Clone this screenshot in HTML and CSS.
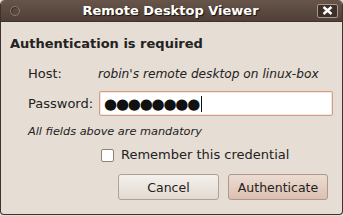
FILE: index.html
```html
<!DOCTYPE html>
<html>
<head>
<meta charset="utf-8">
<link rel="stylesheet" href="styles.css">
</head>
<body>
<div class="window">
  <div class="titlebar">
    <span class="menu-dot"></span>
    <span class="title">Remote Desktop Viewer</span>
    <span class="close">
      <svg width="11" height="9" viewBox="0 0 11 9"><path d="M1.5 1 L9.5 8 M9.5 1 L1.5 8" stroke="#fff" stroke-width="2.4" stroke-linecap="butt"/></svg>
    </span>
  </div>
  <div class="content">
    <div class="heading">Authentication is required</div>
    <div class="form">
      <div class="label">Host:</div>
      <div class="host">robin's remote desktop on linux-box</div>
      <div class="label pw-label">Password:</div>
      <div class="entry"><span class="dots">●●●●●●●●</span><span class="caret"></span></div>
    </div>
    <div class="note">All fields above are mandatory</div>
    <div class="remember"><span class="check"></span><span>Remember this credential</span></div>
    <div class="buttons">
      <div class="btn">Cancel</div>
      <div class="btn primary">Authenticate</div>
    </div>
  </div>
</div>
</body>
</html>
```
FILE: styles.css
```css
html, body {
  margin: 0;
  padding: 0;
  background: #e6ddd4;
}
.window {
  width: 343px;
  height: 215px;
  box-sizing: border-box;
  border: 1px solid #3e322b;
  border-top: none;
  border-radius: 5px 5px 4px 4px;
  background: #e6ddd4;
  overflow: hidden;
  font-family: "DejaVu Sans", sans-serif;
  color: #222;
}
.titlebar {
  height: 22px;
  background: linear-gradient(#67554a, #4f3f36);
  display: flex;
  align-items: center;
  position: relative;
  border-bottom: 1px solid #3e322b;
  box-sizing: border-box;
}
.menu-dot {
  width: 8px;
  height: 8px;
  border: 1px solid #8a7a70;
  border-radius: 50%;
  margin-left: 9px;
  margin-top: 1px;
  box-shadow: inset 1px 1px 0 #3a2d26;
}
.title {
  flex: 1;
  text-align: center;
  color: #fff;
  font-weight: bold;
  font-size: 13px;
  text-shadow: 1px 1px 1px #1a120e;
  margin-left: 4px;
}
.close {
  width: 19px;
  height: 12px;
  border: 1px solid #a8998f;
  border-radius: 2px;
  background: #3d3029;
  margin-right: 4px;
  display: flex;
  align-items: center;
  justify-content: center;
}
.content {
  padding: 14px 0 0 0;
}
.heading {
  font-weight: bold;
  font-size: 13px;
  line-height: 16px;
  margin-left: 9px;
}
.form {
  display: grid;
  grid-template-columns: 71px 234px;
  margin-left: 27px;
  margin-top: 14px;
  row-gap: 9px;
  align-items: center;
}
.label {
  font-size: 13px;
  line-height: 16px;
}
.host {
  font-style: italic;
  font-size: 12.2px;
  line-height: 16px;
  white-space: nowrap;
  margin-left: -1px;
}
.entry {
  height: 25px;
  box-sizing: border-box;
  border: 1px solid #d49c85;
  border-radius: 2px;
  background: #fff;
  display: flex;
  align-items: center;
  padding-left: 4px;
  box-shadow: inset 0 0 0 1px #f6e6de;
}
.dots {
  font-size: 15px;
  letter-spacing: -1.2px;
  color: #111;
  line-height: 18px;
}
.caret {
  width: 1px;
  height: 16px;
  background: #111;
  margin-left: 2px;
}
.note {
  font-style: italic;
  font-size: 11.3px;
  margin-left: 27px;
  margin-top: 9px;
  line-height: 14px;
}
.remember {
  display: flex;
  align-items: center;
  margin-left: 100px;
  margin-top: 8px;
  font-size: 13px;
  line-height: 16px;
}
.check {
  width: 11px;
  height: 11px;
  border: 1px solid #8d8179;
  border-radius: 2px;
  background: #fff;
  margin-right: 7px;
}
.buttons {
  display: flex;
  gap: 9px;
  margin-left: 117px;
  margin-top: 11px;
}
.btn {
  width: 101px;
  height: 26px;
  box-sizing: border-box;
  border: 1px solid #aea197;
  border-radius: 3px;
  background: linear-gradient(#f4f0ec, #e3dad2);
  display: flex;
  align-items: center;
  justify-content: center;
  font-size: 12.5px;
}
.btn.primary {
  width: 100px;
  background: linear-gradient(#ecdcd2, #dcc0b1);
  border-color: #ad988c;
}
```
